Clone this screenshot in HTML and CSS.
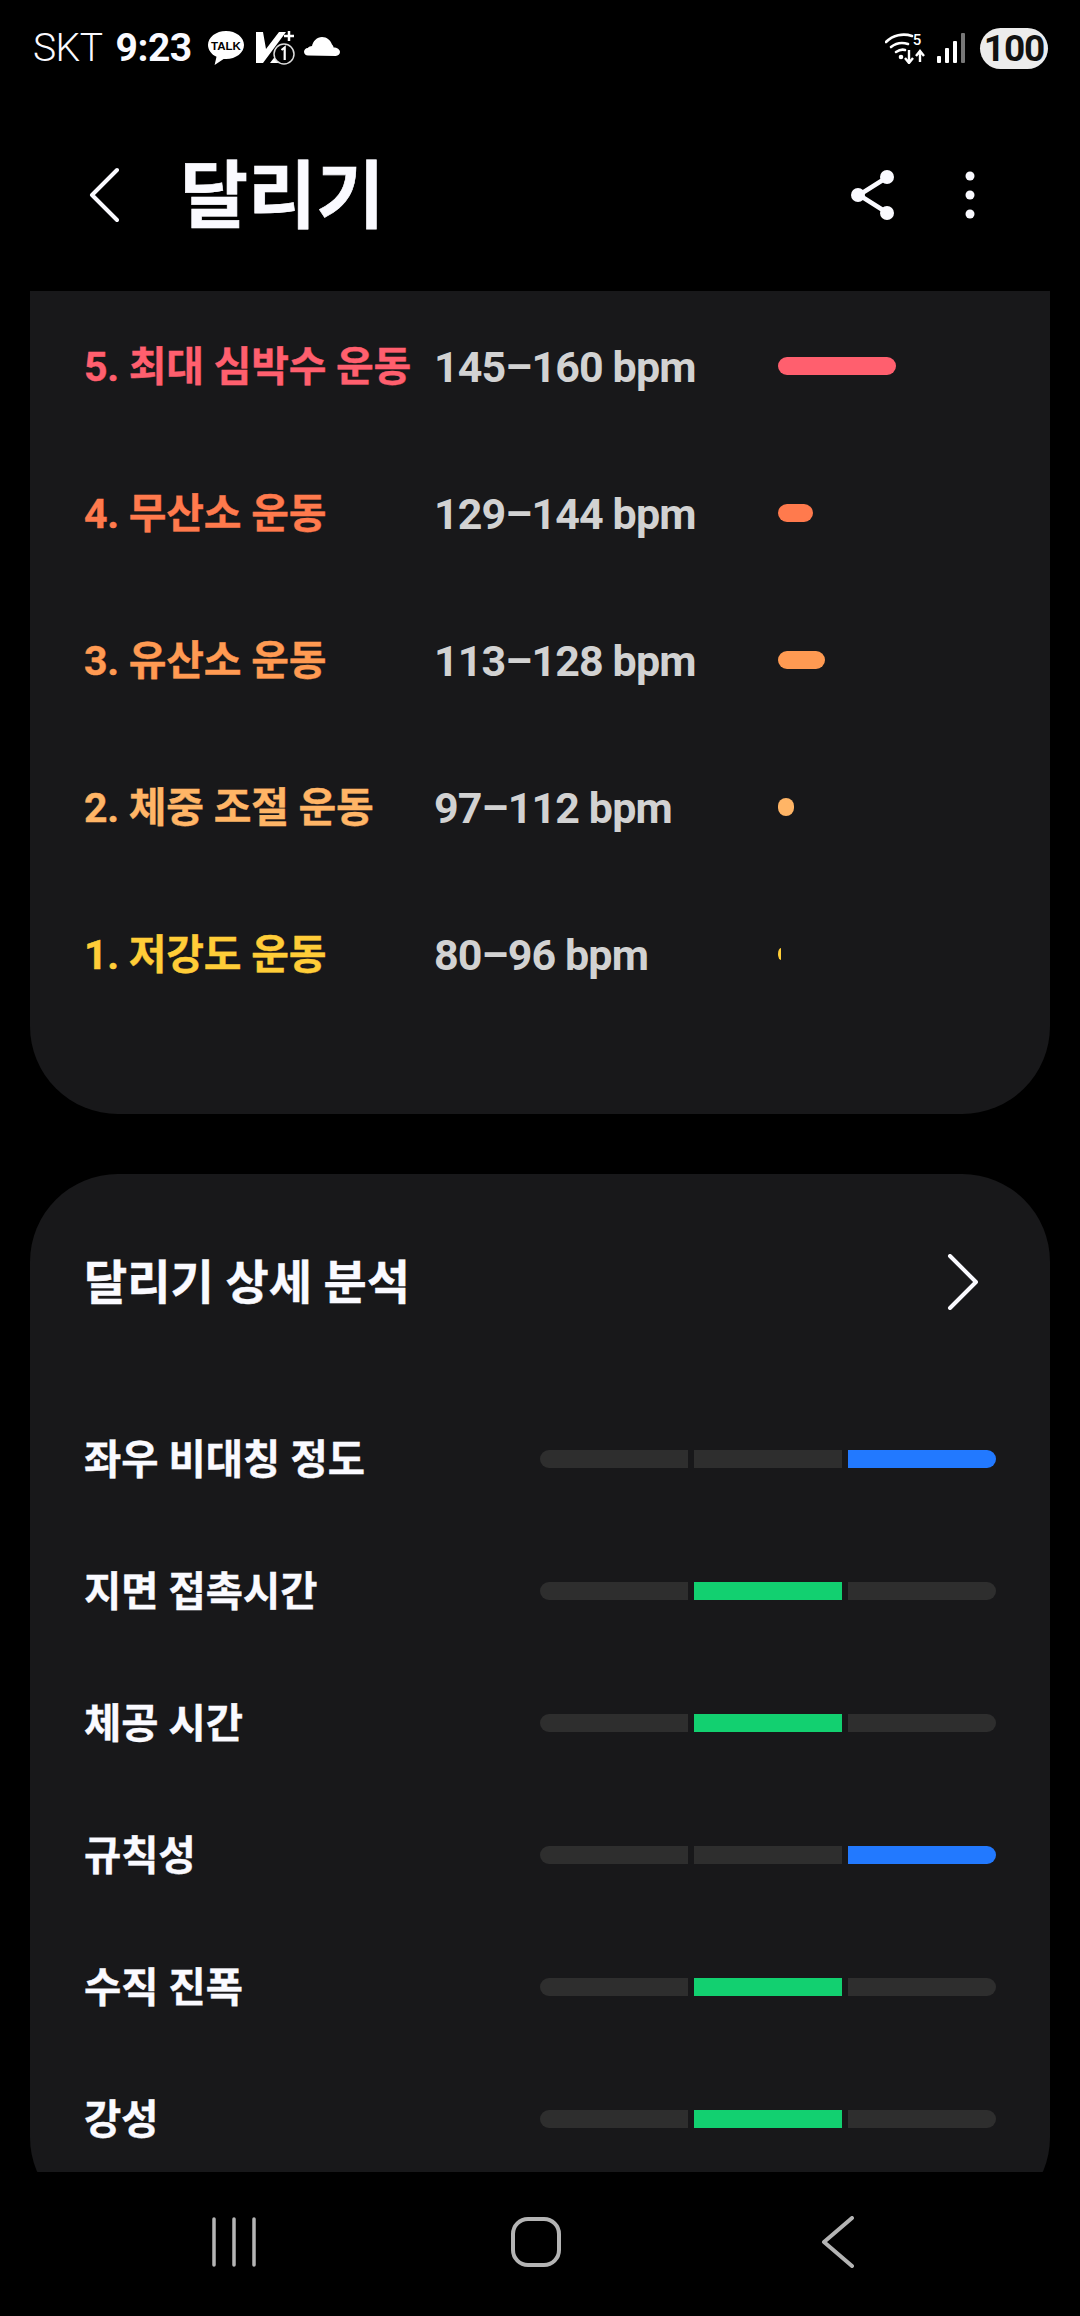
FILE: index.html
```html
<!DOCTYPE html>
<html lang="ko">
<head>
<meta charset="utf-8">
<title>달리기</title>
<link rel="stylesheet" href="styles.css">
</head>
<body>
<div class="phone">
  <div class="status">
    <div class="status-left">
      <span class="carrier">SKT</span>
      <span class="clock">9:23</span>
      <svg class="ic-talk" width="38" height="36" viewBox="0 0 38 36"><path d="M19 1C9 1 1 7.300 1 15c0 5 3.400 9.400 8.500 11.800L7.600 35l9-6.100c.8.100 1.600.1 2.400.1 10 0 18-6.300 18-14S29 1 19 1z" fill="#fff"/><text x="19" y="20" text-anchor="middle" class="talk-text">TALK</text></svg>
      <svg class="ic-volte" width="40" height="34" viewBox="0 0 40 34"><path d="M1 1h7l3 17L24 1h7L8 32H1z" fill="#fff"/><path d="M15 32l7-9h3l-3 6h2v3z" fill="#fff"/><path d="M29 5h10M34 0v10" stroke="#fff" stroke-width="2.500" fill="none"/><circle cx="29" cy="23" r="10" fill="#000" stroke="#ddd" stroke-width="1.500"/><path d="M26.500 19l3.200-2.500V29" stroke="#fff" stroke-width="2.200" fill="none"/></svg>
      <svg class="ic-cloud" width="36" height="19" viewBox="0 0 36 19"><path d="M4 18.500C1.800 18.500 0 16.900 0 14.800s1.600-3.800 3.800-3.900C5 9.700 6.500 9 8 9c1-5 5-9 10-9 5 0 8.500 3.400 10 7.500 1 .9 1.500 2 1.600 3 3.400 0 6.400 1.800 6.400 4.600 0 2.300-1.900 3.900-4.200 3.900z" fill="#fff"/></svg>
    </div>
    <div class="status-right">
      <svg width="40" height="32" viewBox="0 0 40 32"><g fill="none" stroke="#fff" stroke-width="2.600" stroke-linecap="round"><path d="M1 10C8 3 18 1 27 4"/><path d="M6 15c5-4 11-5 17-3"/><path d="M11 20c3-2 6-3 9-2"/></g><circle cx="16" cy="25" r="2.300" fill="#fff"/><path d="M24 18v12M20 26l4 5 4-5M35 30V20M31 24l4-5 4 5" fill="none" stroke="#fff" stroke-width="2.400"/><text x="32" y="13" text-anchor="middle" class="wifi-five">5</text></svg>
      <svg class="ic-signal" width="28" height="30" viewBox="0 0 28 30"><rect x="0" y="23" width="4" height="7" rx="1" fill="#fff"/><rect x="8" y="15" width="4" height="15" rx="1" fill="#fff"/><rect x="16" y="8" width="4" height="22" rx="1" fill="#fff"/><rect x="24" y="0" width="4" height="30" rx="1" fill="#777"/></svg>
      <span class="battery">100</span>
    </div>
  </div>

  <header class="appbar">
    <svg class="back" width="30" height="56" viewBox="0 0 30 56"><path d="M28 3L3 28l25 25" fill="none" stroke="#fafaff" stroke-width="4" stroke-linecap="round" stroke-linejoin="round"/></svg>
    <h1 class="title">달리기</h1>
    <svg class="share" width="44" height="50" viewBox="0 0 44 50"><path d="M35 8L8 25l27 17" fill="none" stroke="#fafaff" stroke-width="4.500"/><circle cx="36" cy="7" r="7" fill="#fafaff"/><circle cx="7" cy="25" r="7" fill="#fafaff"/><circle cx="36" cy="43" r="7" fill="#fafaff"/></svg>
    <svg class="more" width="10" height="48" viewBox="0 0 10 48"><circle cx="5" cy="5" r="4.500" fill="#fafaff"/><circle cx="5" cy="24" r="4.500" fill="#fafaff"/><circle cx="5" cy="43" r="4.500" fill="#fafaff"/></svg>
  </header>

  <main class="scroller">
    <section class="card zones">
      <div class="zone z5"><span class="zone-name">5. 최대 심박수 운동</span><span class="zone-range">145–160 bpm</span><span class="zone-bar" style="width:118px"></span></div>
      <div class="zone z4"><span class="zone-name">4. 무산소 운동</span><span class="zone-range">129–144 bpm</span><span class="zone-bar" style="width:35px"></span></div>
      <div class="zone z3"><span class="zone-name">3. 유산소 운동</span><span class="zone-range">113–128 bpm</span><span class="zone-bar" style="width:47px"></span></div>
      <div class="zone z2"><span class="zone-name">2. 체중 조절 운동</span><span class="zone-range">97–112 bpm</span><span class="zone-bar" style="width:16px"></span></div>
      <div class="zone z1"><span class="zone-name">1. 저강도 운동</span><span class="zone-range">80–96 bpm</span><span class="zone-bar sliver" style="width:3px"></span></div>
    </section>

    <section class="card analysis">
      <div class="analysis-head">
        <h2 class="analysis-title">달리기 상세 분석</h2>
        <svg width="32" height="56" viewBox="0 0 32 56"><path d="M4 2l26 26L4 54" fill="none" stroke="#fafaff" stroke-width="4" stroke-linecap="round" stroke-linejoin="round"/></svg>
      </div>
      <div class="metric"><span class="metric-name">좌우 비대칭 정도</span><div class="scale"><i></i><i></i><i class="blue"></i></div></div>
      <div class="metric"><span class="metric-name">지면 접촉시간</span><div class="scale"><i></i><i class="green"></i><i></i></div></div>
      <div class="metric"><span class="metric-name">체공 시간</span><div class="scale"><i></i><i class="green"></i><i></i></div></div>
      <div class="metric"><span class="metric-name">규칙성</span><div class="scale"><i></i><i></i><i class="blue"></i></div></div>
      <div class="metric"><span class="metric-name">수직 진폭</span><div class="scale"><i></i><i class="green"></i><i></i></div></div>
      <div class="metric"><span class="metric-name">강성</span><div class="scale"><i></i><i class="green"></i><i></i></div></div>
    </section>
  </main>

  <nav class="navbar">
    <svg width="60" height="52" viewBox="0 0 60 52"><path d="M10 3v46M30 3v46M50 3v46" stroke="#b4b4b4" stroke-width="3.500" stroke-linecap="round" fill="none"/></svg>
    <svg width="60" height="52" viewBox="0 0 60 52"><rect x="7" y="3" width="46" height="46" rx="15" fill="none" stroke="#b4b4b4" stroke-width="4"/></svg>
    <svg width="60" height="52" viewBox="0 0 60 52"><path d="M44 2L16 26l28 24" fill="none" stroke="#b4b4b4" stroke-width="4" stroke-linecap="round" stroke-linejoin="round"/></svg>
  </nav>
</div>
</body>
</html>
```
FILE: styles.css
```css
* { box-sizing: border-box; }
html, body { margin: 0; padding: 0; background: #000; }
.phone {
  width: 1080px;
  height: 2316px;
  display: flex;
  flex-direction: column;
  background: #000;
  color: #fafaff;
  font-family: Roboto, "Noto Sans CJK KR", sans-serif;
  overflow: hidden;
}
.status {
  height: 96px;
  flex: none;
  display: flex;
  justify-content: space-between;
  align-items: center;
  padding: 0 32px 0 33px;
}
.status-left, .status-right { display: flex; align-items: center; }
.carrier { font-size: 39px; font-weight: 300; letter-spacing: -0.5px; }
.clock { font-size: 39px; font-weight: 700; margin-left: 13px; letter-spacing: -0.5px; }
.ic-talk { margin-left: 15px; }
.ic-volte { margin-left: 10px; }
.ic-cloud { margin-left: 9px; margin-top: -4px; }
.talk-text { font: 700 11.500px "Liberation Sans", sans-serif; fill: #000; }
.wifi-five { font: 500 15px Roboto, sans-serif; fill: #fff; }
.ic-signal { margin-left: 12px; }
.battery {
  margin-left: 15px;
  width: 68px;
  height: 41px;
  border-radius: 21px;
  background: #ececec;
  color: #111;
  font-size: 37px;
  font-weight: 700;
  line-height: 41px;
  text-align: center;
  letter-spacing: -1px;
}
.appbar {
  height: 195px;
  flex: none;
  display: flex;
  align-items: center;
  padding: 3px 0 0 89px;
}
.title {
  margin: 0 0 0 61px;
  padding-top: 4px;
  font-size: 74px;
  font-weight: 700;
  line-height: 1;
  flex: 1;
  -webkit-text-stroke: 0.6px #fafaff;
}
.share { margin-right: 70px; }
.more { margin-right: 105px; }
.scroller {
  flex: 1;
  min-height: 0;
  margin: 0 30px;
  overflow: hidden;
  border-radius: 0 0 8px 8px;
}
.card { background: #18181a; }
.zones {
  padding: 1px 0 87px 54px;
  border-radius: 0 0 88px 88px;
}
.zone { height: 147px; display: flex; align-items: center; }
.zone-name { width: 350px; flex: none; margin-top: -5px; font-size: 41px; font-weight: 700; letter-spacing: -0.25px; -webkit-text-stroke: 0.4px currentColor; }
.zone-range { width: 344px; flex: none; margin-top: 3px; font-size: 43px; font-weight: 700; color: #d2d2d2; letter-spacing: -0.9px; }
.zone-bar { display: block; height: 18px; border-radius: 9px; background: currentColor; }
.zone-bar.sliver { height: 12px; border-radius: 100% 0 0 100% / 50% 0 0 50%; }
.z5 { color: #ff5f6e; }
.z4 { color: #ff7a4d; }
.z3 { color: #ff9a52; }
.z2 { color: #ffb566; }
.z1 { color: #ffcd38; }
.analysis {
  margin-top: 60px;
  padding-bottom: 40px;
  border-radius: 88px;
}
.analysis-head {
  height: 216px;
  margin-bottom: 3px;
  display: flex;
  align-items: center;
  justify-content: space-between;
  padding: 0 72px 0 54px;
}
.analysis-title { margin: 0; font-size: 47px; font-weight: 700; line-height: 1; -webkit-text-stroke: 0.4px #fafaff; }
.metric {
  height: 132px;
  display: flex;
  align-items: center;
  justify-content: space-between;
  padding: 0 54px 0 54px;
}
.metric-name { margin-top: -6px; font-size: 40.500px; font-weight: 700; color: #fafaff; -webkit-text-stroke: 0.4px #fafaff; }
.scale { display: flex; gap: 6px; width: 456px; }
.scale i { display: block; flex: 1; height: 18px; background: #2e2e2e; }
.scale i:first-child { border-radius: 9px 0 0 9px; }
.scale i:last-child { border-radius: 0 9px 9px 0; }
.scale i.blue { background: #2279ff; }
.scale i.green { background: #12d070; }
.navbar {
  height: 144px;
  flex: none;
  display: flex;
  justify-content: center;
  gap: 242px;
  padding: 44px 8px 0 0;
}
```
